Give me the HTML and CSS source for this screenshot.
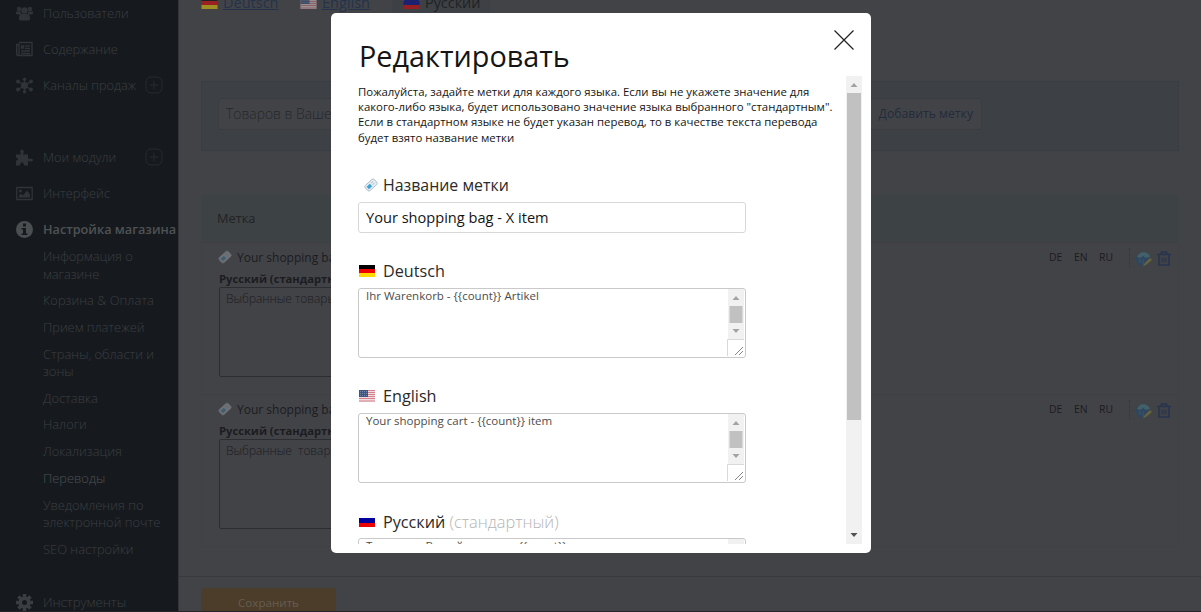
FILE: index.html
```html
<!DOCTYPE html>
<html lang="ru">
<head>
<meta charset="utf-8">
<title>Редактировать</title>
<link rel="stylesheet" href="styles.css">
</head>
<body>
<svg class="defs" width="0" height="0">
  <symbol id="de" viewBox="0 0 16 12"><path fill="#000" d="M0 0h16v4H0z"/><path fill="#f00000" d="M0 4h16v4H0z"/><path fill="#ffd900" d="M0 8h16v4H0z"/></symbol>
  <symbol id="us" viewBox="0 0 16 12"><path fill="#f1dcdf" d="M0 0h16v12H0z"/><path stroke="#d4808a" d="M0 .5h16M0 2.5h16M0 4.5h16M0 6.5h16M0 8.5h16M0 11h16"/><path fill="#3f5481" d="M0 0h9v7H0z"/><path stroke="#7385aa" stroke-dasharray="1 1" d="M1 1.5h7M1 3.5h7M1 5.5h7"/></symbol>
  <symbol id="ru" viewBox="0 0 16 12"><path fill="#fafafa" d="M0 0h16v4H0z"/><path fill="#00009c" d="M0 3h16v5H0z"/><path fill="#ec0000" d="M0 8h16v4H0z"/></symbol>
  <symbol id="tag" viewBox="0 0 16 16"><g transform="rotate(-42 8 8)"><rect x="1" y="4" width="14" height="8" rx="2" fill="#e6eef3" stroke="#a9bac5"/><path fill="#38a4d8" d="M3 6h5v4H3z"/><path stroke="#9fb5c4" d="M9.5 6.5h3M9.5 9h3"/></g></symbol>
  <symbol id="globe" viewBox="0 0 16 16"><circle cx="7" cy="8" r="7" fill="#2f475e"/><path fill="#435f69" d="M1 6q2-5 7-5 5 1 6 5l-4 1-3-2-3 2z"/><path stroke="#3c566e" fill="none" d="M4 8v4M7 8v5"/><path d="M8 13l6-6 2 2-6 5-3 1z" fill="#6a6339"/></symbol>
  <symbol id="trash" viewBox="0 0 14 15"><path fill="none" stroke="#28344d" stroke-width="1.6" d="M0 3.500h14M4.500 3V1h5v2M2 4v10h10V4"/><path stroke="#28344d" d="M5 6.500v5M7 6.500v5M9 6.500v5"/></symbol>
</svg>
<div class="app">
  <nav class="sidebar">
    <div class="item"><svg class="ico" viewBox="0 0 17 16"><circle cx="3" cy="3.500" r="2.200"/><circle cx="14" cy="3.500" r="2.200"/><circle cx="8.500" cy="5" r="3.300"/><path d="M0 6h4.500l1 3H1.500Q0 9 0 7.500zM17 6h-4.500l-1 3h4Q17 9 17 7.500zM3 12q0-3.500 3-3.500h5q3 0 3 3.500v1.500q0 1.500-1.500 1.500h-8Q3 15 3 13.500z"/></svg><span>Пользователи</span></div>
    <div class="item"><svg class="ico line" viewBox="0 0 17 16"><path d="M3 1h13v13H2q-1.300 0-1.300-1.500V3H3v9.500q0 1.500-1 1.500M9 4.500h5M9 7h5M5 9.500h9M5 12h9"/><path d="M5.500 4.500h2v2h-2z"/></svg><span>Содержание</span></div>
    <div class="item"><svg class="ico" viewBox="0 0 17 16"><path class="st" d="M8.500 2v12M2 4l13 8M15 4L2 12"/><circle cx="8.500" cy="8" r="3.500"/><circle cx="8.500" cy="1.700" r="1.700"/><circle cx="8.500" cy="14.300" r="1.700"/><circle cx="2" cy="4" r="1.900"/><circle cx="15" cy="4" r="1.900"/><circle cx="2" cy="12" r="1.900"/><circle cx="15" cy="12" r="1.900"/></svg><span>Каналы продаж</span><svg class="plus" viewBox="0 0 18 18"><rect x="1" y="1" width="16" height="16" rx="5"/><path d="M4.500 9h9M9 4.500v9"/></svg></div>
    <div class="item"></div>
    <div class="item"><svg class="ico" viewBox="0 0 17 16"><path d="M0 5h5L4.200 2Q4.500 0 6 0t1.800 2L7 5h5v4q2 1 2.500 0 2.500 0 2.500 1.500T15 12q-1-.500-3-.500V16H8q0-3-2-3t-2 3H0v-5q2 0 2-1.500T0 8z"/></svg><span>Мои модули</span><svg class="plus" viewBox="0 0 18 18"><rect x="1" y="1" width="16" height="16" rx="5"/><path d="M4.500 9h9M9 4.500v9"/></svg></div>
    <div class="item"><svg class="ico" viewBox="0 0 17 16"><path class="st" fill="none" d="M.800 2h15.400v12H.800z"/><circle cx="4.500" cy="5.500" r="1.500"/><path d="M3 12V10l2-2 2 2 4-5 3 4v3z"/></svg><span>Интерфейс</span></div>
    <div class="item active"><svg class="ico" viewBox="0 0 17 17"><circle cx="8.500" cy="8.500" r="8.500"/><path fill="#161a1e" d="M7 2.500h3v3H7zM5.500 7H10v5.500h1.500V14h-6v-1.500H7v-4H5.500z"/></svg><span>Настройка магазина</span></div>
    <div class="sub">
      <span>Информация о<br>магазине</span><span>Корзина &amp; Оплата</span><span>Прием платежей</span><span>Страны, области и<br>зоны</span><span>Доставка</span><span>Налоги</span><span>Локализация</span><span class="cur">Переводы</span><span>Уведомления по<br>электронной почте</span><span>SEO настройки</span>
    </div>
    <div class="item tools"><svg class="ico" viewBox="0 0 17 17"><path class="gear" d="M8.500 0v17M0 8.500h17M2.500 2.500l12 12M14.500 2.500l-12 12"/><circle cx="8.500" cy="8.500" r="6"/><circle cx="8.500" cy="8.500" r="2.500" fill="#161a1e"/></svg><span>Инструменты</span></div>
  </nav>
  <main class="main">
    <div class="tabs">
      <div class="tab de"><svg class="flag"><use href="#de"/></svg><u>Deutsch</u></div>
      <div class="tab en"><svg class="flag"><use href="#us"/></svg><u>English</u></div>
      <div class="tab on"><svg class="flag"><use href="#ru"/></svg><span>Русский</span></div>
    </div>
    <section class="add"><div class="field">Товаров в Вашей корзине</div><div class="btn">Добавить метку</div></section>
    <section class="table">
      <header class="thead">Метка</header>
      <article class="row">
        <div class="cell"><div class="name"><svg class="tag"><use href="#tag"/></svg>Your shopping bag - X item</div><b>Русский (стандартный)</b><div class="area">Выбранные товары</div></div>
        <div class="langs"><span>DE</span><span>EN</span><span>RU</span></div>
        <div class="acts"><svg class="globe"><use href="#globe"/></svg><svg class="trash"><use href="#trash"/></svg></div>
      </article>
      <article class="row">
        <div class="cell"><div class="name"><svg class="tag"><use href="#tag"/></svg>Your shopping bag - X items</div><b>Русский (стандартный)</b><div class="area">Выбранные &nbsp;товары</div></div>
        <div class="langs"><span>DE</span><span>EN</span><span>RU</span></div>
        <div class="acts"><svg class="globe"><use href="#globe"/></svg><svg class="trash"><use href="#trash"/></svg></div>
      </article>
    </section>
    <footer class="foot"><div class="save">Сохранить</div></footer>
  </main>
</div>
<div class="modal">
  <div class="mhead"><h1>Редактировать</h1><svg class="close" viewBox="0 0 20 20"><path d="M.500 .500l19 19M19.500 .500l-19 19"/></svg></div>
  <div class="mbody">
    <div class="content">
      <p>Пожалуйста, задайте метки для каждого языка. Если вы не укажете значение для<br>какого-либо языка, будет использовано значение языка выбранного "стандартным".<br>Если в стандартном языке не будет указан перевод, то в качестве текста перевода<br>будет взято название метки</p>
      <div class="label first"><svg class="tag"><use href="#tag"/></svg><span>Название метки</span></div>
      <div class="input"><span>Your shopping bag - X item</span></div>
      <div class="label"><svg class="flag"><use href="#de"/></svg><span>Deutsch</span></div>
      <div class="ta"><span>Ihr Warenkorb - {{count}} Artikel</span><svg class="sb" viewBox="0 0 18 67"><path fill="#f1f1f1" d="M1 0h16v50H1z"/><path fill="#a3a3a3" d="M5.500 11h7L9 7zM5.500 40h7L9 44z"/><path fill="#c1c1c1" d="M2.500 17h13v17h-13z"/><path fill="none" stroke="#d9d9d9" d="M.500 67V50.500H17"/><path stroke="#888" d="M8 66l8-8M12 66l4-4"/></svg></div>
      <div class="label"><svg class="flag"><use href="#us"/></svg><span>English</span></div>
      <div class="ta"><span>Your shopping cart - {{count}} item</span><svg class="sb" viewBox="0 0 18 67"><path fill="#f1f1f1" d="M1 0h16v50H1z"/><path fill="#a3a3a3" d="M5.500 11h7L9 7zM5.500 40h7L9 44z"/><path fill="#c1c1c1" d="M2.500 17h13v17h-13z"/><path fill="none" stroke="#d9d9d9" d="M.500 67V50.500H17"/><path stroke="#888" d="M8 66l8-8M12 66l4-4"/></svg></div>
      <div class="label"><svg class="flag"><use href="#ru"/></svg><span>Русский <i>(стандартный)</i></span></div>
      <div class="ta"><span>Товаров в Вашей корзине: {{count}}</span><svg class="sb" viewBox="0 0 18 67"><path fill="#f1f1f1" d="M1 0h16v50H1z"/></svg></div>
    </div>
    <svg class="scroll" viewBox="0 0 16 468"><path fill="#f1f1f1" d="M0 0h16v468H0z"/><path fill="#c1c1c1" d="M1 17h14v327H1z"/><path fill="#a3a3a3" d="M4.500 11h7L8 7z"/><path fill="#505050" d="M4.500 457h7L8 461z"/></svg>
  </div>
</div>
</body>
</html>
```
FILE: styles.css
```css
* { box-sizing: border-box; }
html, body { margin: 0; height: 612px; overflow: hidden; }
body { font-family: "Open Sans", "Noto Sans", sans-serif; background: #424347; position: relative; }
svg { display: block; flex: none; }
.defs { position: absolute; }
.app { display: flex; height: 612px; border-bottom: 1px solid #2a2329; overflow: hidden; white-space: nowrap; }

.sidebar { width: 179px; flex: none; background: #161a1e; border-right: 1px solid #33353a; color: #3b3f42; padding-left: 16px; font-size: 12.8px; font-weight: 300; }
.item { height: 36px; display: flex; align-items: center; }
.item:first-child { margin-top: -5px; }
.item span { width: 102px; margin-left: 10px; }
.ico { width: 17px; height: 17px; fill: #303438; }
.ico.line { fill: none; stroke: #303438; stroke-width: 1.4; }
.st { stroke: #303438; stroke-width: 1.3; }
.gear { stroke: #3b3e41; stroke-width: 3.5; }
.plus { width: 18px; height: 18px; fill: none; stroke: #272b2f; }
.active { color: #4f5255; font-weight: 600; font-size: 12.7px; }
.active .ico, .tools .ico { fill: #4b4e50; }
.tools .ico { fill: #3b3e41; }
.tools { font-size: 13.2px; }
.sub { display: flex; flex-direction: column; gap: 9.2px; padding: 1px 0 0 27px; line-height: 17.5px; font-size: 12.9px; }
.sub .cur { color: #4c5053; }
.tools { margin-top: 26px; }

.main { flex: 1; min-width: 0; }
.flag { width: 16px; height: 12px; }
.tabs { display: flex; height: 13px; padding-left: 22px; align-items: flex-end; line-height: 22px; color: #202124; }
.tab { display: flex; align-items: center; gap: 5px; height: 20px; }
.tab .flag { opacity: .5; width: 17px; }
.tab.de { width: 99px; }
.tab.en { width: 92px; }
.tab u { color: #23334b; font-size: 14.5px; }
.tab.on { width: 98px; background: #3d4145; padding-left: 11px; font-size: 14.4px; }
.add { margin: 68px 22px 0 22px; height: 70px; background: #3d4145; border: 1px solid #393d43; display: flex; justify-content: space-between; padding: 16px 196px 0 16px; }
.field, .btn { height: 32px; border: 1px solid #3a3c40; border-radius: 3px; background: #424347; line-height: 29px; }
.field { width: 500px; padding-left: 7px; font-size: 13.9px; color: #26272a; font-weight: 300; }
.btn { padding: 0 8px; font-size: 12.2px; color: #222c3c; }
.table { margin: 44px 22px 0; border: 1px solid #3f4145; border-top: 0; }
.thead { height: 47px; background: #3d4244; padding-left: 15px; line-height: 47px; font-size: 12.8px; color: #222326; }
.row { height: 152px; border-top: 1px solid #3e3f43; display: flex; color: #1b1c1f; padding: 5px 8px 0 16px; }
.cell { flex: 1; font-size: 12px; }
.name { display: flex; height: 18px; align-items: center; gap: 5px; }
.tag { width: 16px; height: 14px; }
.name .tag { opacity: .28; width: 14px; }
.cell b { display: block; line-height: 18px; margin: 4px 0 0 1px; font-size: 11.2px; font-weight: 700; }
.area { border: 1px solid #2c2d30; border-radius: 2px; width: 500px; height: 90px; margin-left: 1px; padding: 2px 6px; font-weight: 300; font-size: 11.9px; margin-top: -1px; }
.langs { display: flex; font-size: 10.4px; line-height: 18px; }
.langs span { width: 25px; }
.langs span:last-child { width: 30px; }
.acts { border-left: 1px dotted #333439; display: flex; gap: 5px; height: 20px; padding: 3px 0 0 6px; width: 41px; }
.globe { width: 16px; height: 16px; }
.trash { width: 14px; height: 15px; }
.foot { margin-top: 29px; border-top: 1px solid #393a3e; padding: 11px 22px; }
.save { width: 135px; height: 40px; background: #4c3d2a; border-radius: 3px; color: #655c50; text-align: center; font-size: 11.6px; line-height: 30px; }

.modal { position: absolute; left: 331px; top: 13px; width: 540px; height: 540px; background: #fff; border-radius: 5px; color: #151515; padding: 0 9px 9px 27px; white-space: nowrap; }
.mhead { display: flex; justify-content: space-between; height: 63px; padding-right: 8px; }
h1 { margin: 22px 0 0 1px; font-size: 28.8px; line-height: 42px; font-weight: 400; }
.close { width: 20px; height: 20px; margin-top: 17px; stroke: #222; stroke-width: 1.2; fill: none; }
.mbody { display: flex; justify-content: space-between; height: 468px; overflow: hidden; }
.scroll { width: 16px; height: 468px; }
.content { width: 480px; }
p { margin: 8px 0 0; font-size: 11.4px; line-height: 15.2px; height: 82px; }
.label { display: flex; align-items: center; height: 24px; font-size: 16.2px; margin: 26px 0 5px 1px; color: #2a2a2a; }
.label span { margin-left: 8px; }
.label .tag { margin-left: 4px; }
.label.first { margin-top: 7px; font-size: 15.9px; }
.label .tag + span { margin-left: 4px; }
.label i { font-style: normal; color: #b5b5b5; font-weight: 300; font-size: 16.4px; }
.input { width: 388px; height: 31px; border: 1px solid #d8d8d8; border-radius: 3px; padding-left: 7px; font-size: 14.6px; line-height: 28px; }
.ta { width: 388px; height: 70px; border: 1px solid #c9c9c9; border-radius: 3px; display: flex; justify-content: space-between; padding-left: 7px; font-size: 11.5px; line-height: 13px; color: #4c4c4c; }
.sb { width: 18px; height: 67px; }
```
